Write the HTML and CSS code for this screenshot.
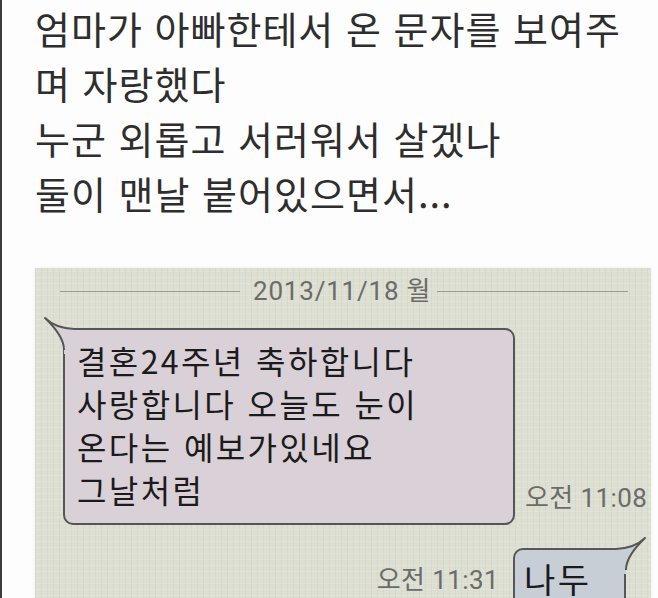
FILE: index.html
```html
<!DOCTYPE html>
<html lang="ko">
<head>
    <meta charset="UTF-8">
    <meta name="viewport" content="width=device-width, initial-scale=1.0">
    <title>결혼 24주년 문자</title>
    <link rel="stylesheet" href="styles.css">
</head>
<body>
    <div class="page">
        <div class="caption">
            <div>엄마가 아빠한테서 온 문자를 보여주</div>
            <div>며 자랑했다</div>
            <div>누군 외롭고 서러워서 살겠나</div>
            <div>둘이 맨날 붙어있으면서...</div>
        </div>

        <div class="chat">
            <div class="date-row">
                <span class="date-line left"></span>
                <span class="date">2013/11/18 월</span>
                <span class="date-line right"></span>
            </div>

            <div class="msg msg-in">
                <div class="bubble bubble-in">
                    <svg class="tail" width="32" height="40" viewBox="0 0 32 40">
                        <path d="M2,2 Q12,12 31,13 L31,38 L21,38 L21,34 Q21,20 2,2 Z" fill="#d9d0d8"/>
                        <path d="M31,13 Q12,12 2,2 Q21,20 21,34" fill="none" stroke="#565656" stroke-width="2" stroke-linejoin="round"/>
                    </svg>
                    <div>결혼24주년 축하합니다</div>
                    <div>사랑합니다 오늘도 눈이</div>
                    <div>온다는 예보가있네요</div>
                    <div>그날처럼</div>
                </div>
                <span class="time time-in">오전 11:08</span>
            </div>

            <div class="msg msg-out">
                <span class="time time-out">오전 11:31</span>
                <div class="bubble bubble-out">
                    <svg class="tail" width="32" height="40" viewBox="0 0 32 40">
                        <path d="M2,2 Q12,12 31,13 L31,38 L21,38 L21,34 Q21,20 2,2 Z" fill="#c8ced6"/>
                        <path d="M31,13 Q12,12 2,2 Q21,20 21,34" fill="none" stroke="#565656" stroke-width="2" stroke-linejoin="round"/>
                    </svg>
                    <div>나두</div>
                </div>
            </div>
        </div>
    </div>
</body>
</html>
```

FILE: styles.css
```css
body {
    margin: 0;
    background-color: #fff;
    font-family: "Noto Sans CJK KR", sans-serif;
}
.page {
    height: 598px;
    overflow: hidden;
    border-left: 2px solid #3d3d3d;
    background-color: #fdfdfd;
}
.caption {
    padding-left: 33px;
    font-size: 38px;
    line-height: 55px;
    letter-spacing: 1px;
    color: #2e2e2e;
    white-space: nowrap;
}
.chat {
    margin: 48px 0 0 33px;
    width: 616px;
    height: 340px;
    padding-top: 8px;
    box-sizing: border-box;
    background-color: #dcdfd1;
    background-image:
        repeating-linear-gradient(0deg, rgba(255, 255, 255, 0.14) 0 1px, transparent 1px 6px),
        repeating-linear-gradient(90deg, rgba(110, 120, 100, 0.07) 0 1px, transparent 1px 6px);
    box-shadow: 0 0 3px rgba(0, 0, 0, 0.08);
}
.date-row {
    display: flex;
    align-items: center;
    margin: 0 23px 0 25px;
    height: 30px;
}
.date-line {
    height: 1px;
    background-color: #9a9d93;
}
.date-line.left {
    width: 180px;
    margin-right: 13px;
}
.date-line.right {
    flex: 1;
    margin-left: 6px;
}
.date {
    font-family: Roboto, "Noto Sans CJK KR", sans-serif;
    font-size: 26px;
    line-height: 30px;
    letter-spacing: 0.8px;
    color: #6b6b69;
}
.msg {
    display: flex;
}
.msg-in {
    align-items: flex-end;
    margin: 22px 0 0 28px;
}
.msg-out {
    align-items: flex-start;
    justify-content: flex-end;
    margin: 23px 25px 0 0;
}
.bubble {
    position: relative;
    border: 2px solid #565656;
    border-radius: 10px;
    font-size: 32px;
    line-height: 43px;
    letter-spacing: 2.4px;
    color: #1b1b1b;
    box-sizing: border-box;
}
.bubble-in {
    width: 452px;
    padding: 9px 10px 12px 12px;
    background-color: #d9d0d8;
    border-top-left-radius: 0;
}
.bubble-out {
    width: 113px;
    height: 80px;
    padding: 7px 8px 0 9px;
    font-size: 34px;
    background-color: #c8ced6;
    border-top-right-radius: 0;
}
.tail {
    position: absolute;
    top: -14px;
    display: block;
}
.bubble-in .tail {
    left: -22px;
}
.bubble-out .tail {
    right: -23px;
    transform: scaleX(-1);
}
.time {
    font-family: Roboto, "Noto Sans CJK KR", sans-serif;
    font-size: 26px;
    line-height: 30px;
    letter-spacing: 0.4px;
    color: #6b6b69;
    white-space: nowrap;
}
.time-in {
    margin: 0 0 12px 10px;
}
.time-out {
    margin: 17px 14px 0 0;
}
```
